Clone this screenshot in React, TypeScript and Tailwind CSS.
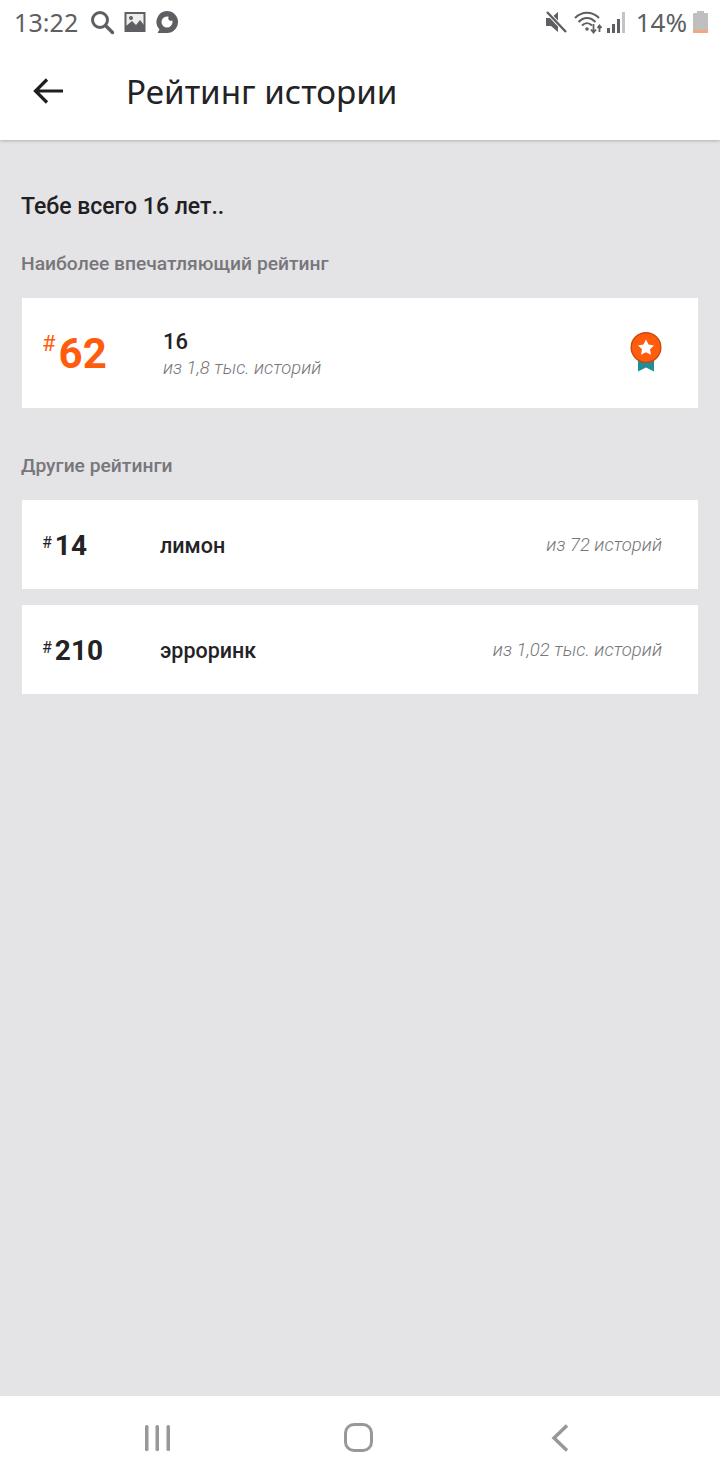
import React from "react";

const roboto = "font-['Roboto',sans-serif]";

// status bar icons are small custom drawings
const StatusBar = () => (
  <div className="h-[44px] flex items-center justify-between pl-[14px] pr-[12px] text-[#5f5f63] font-['Noto_Sans',sans-serif]">
    <div className="flex items-center">
      <span className="text-[25px] leading-none tracking-[0.1px]">13:22</span>
      <svg className="ml-[11px]" width="26" height="26" viewBox="0 0 26 26" fill="none">
        <circle cx="11" cy="11" r="7.5" stroke="#5f5f63" strokeWidth="3" />
        <path d="M16.5 16.5L23.5 23.5" stroke="#5f5f63" strokeWidth="3.4" strokeLinecap="round" />
      </svg>
      <svg className="ml-[9px]" width="22" height="22" viewBox="0 0 22 22">
        <rect x="0.5" y="1" width="21" height="20" fill="#5f5f63" />
        <rect x="2.5" y="3" width="17" height="13" fill="#ededee" />
        <path d="M2 19L2 15L8 10L12 14L16 9L20 14L20 19Z" fill="#5f5f63" />
        <circle cx="7" cy="7" r="2" fill="#5f5f63" />
      </svg>
      <svg className="ml-[9px]" width="24" height="24" viewBox="0 0 24 24">
        <path d="M12 1a11 11 0 0 1 0 22H2.5l2-3.4A11 11 0 0 1 12 1Z" fill="#5f5f63" />
        <path d="M12 6.5a5.5 5.5 0 1 0 5.5 5.5c0-.6-.1-1.2-.3-1.7a2.5 2.5 0 0 1-3.5-3.5A5.5 5.5 0 0 0 12 6.5Z" fill="#ffffff" />
      </svg>
    </div>
    <div className="flex items-center">
      <svg width="24" height="24" viewBox="0 0 24 24">
        <path d="M2 8h5l7-6v20l-7-6H2Z" fill="#5f5f63" />
        <path d="M3 2L22 22" stroke="#ffffff" strokeWidth="4" />
        <path d="M3 2L22 22" stroke="#5f5f63" strokeWidth="2.4" />
      </svg>
      <svg className="ml-[6px]" width="30" height="24" viewBox="0 0 30 24" fill="none">
        <path d="M1 8C8 1 18 1 25 8" stroke="#5f5f63" strokeWidth="2" />
        <path d="M4.5 12C9.5 6.5 16.500 6.5 21.5 12" stroke="#5f5f63" strokeWidth="2" />
        <path d="M8 15.5C11 12.5 15 12.5 18 15.5" stroke="#5f5f63" strokeWidth="2" />
        <circle cx="13" cy="19" r="1.8" fill="#5f5f63" />
        <path d="M19.5 14v8M17 19.5l2.5 3 2.5-3" stroke="#5f5f63" strokeWidth="1.8" />
        <path d="M25.5 22v-6M23.5 18l2-2.5 2 2.5" stroke="#5f5f63" strokeWidth="1.8" />
      </svg>
      <svg className="ml-[2px]" width="20" height="24" viewBox="0 0 20 24">
        <rect x="1" y="18" width="3" height="5" fill="#5f5f63" />
        <rect x="6" y="14" width="3" height="9" fill="#5f5f63" />
        <rect x="11" y="9" width="3" height="14" fill="#5f5f63" />
        <rect x="16" y="2" width="3" height="21" fill="#c4c4c6" />
      </svg>
      <span className="ml-[10px] text-[26px] leading-none">14%</span>
      <div className="ml-[6px] w-[15px] h-[22px] flex flex-col items-center">
        <div className="w-[7px] h-[2px] bg-[#c0bfc0]" />
        <div className="w-[15px] h-[20px] bg-[#c0bfc0] flex flex-col justify-end rounded-[1px]">
          <div className="h-[3px] bg-[#f4a77f]" />
        </div>
      </div>
    </div>
  </div>
);

const Header = () => (
  <div className="h-[96px] flex items-center pb-[2px]">
    <svg className="ml-[33px]" width="32" height="32" viewBox="0 0 32 32" fill="none">
      <path d="M30 16H3M14 4.5L2.5 16L14 27.5" stroke="#1f1f22" strokeWidth="3.2" />
    </svg>
    <h1 className="ml-[61px] mt-[2px] text-[33.2px] leading-none text-[#232326] font-normal font-['Noto_Sans',sans-serif]">Рейтинг истории</h1>
  </div>
);

const Medal = () => (
  <svg width="32" height="40" viewBox="0 0 32 40">
    <path d="M8 24V39.5L16 35.5L24 39.5V24Z" fill="#1f8f96" />
    <circle cx="16" cy="15.5" r="14.8" fill="#ff5c0d" stroke="#c8490f" strokeWidth="1.4" />
    <path d="M16 7.5L18.5 12.6L24 13.4L20 17.3L21 22.8L16 20.2L11 22.8L12 17.3L8 13.4L13.5 12.6Z" fill="#ffffff" />
  </svg>
);

const RankRow = ({ rank, name, total }: { rank: string; name: string; total: string }) => (
  <div className="h-[89px] bg-white flex items-center pl-[20px] pr-[36px] pt-[2px]">
    <div className="w-[118px] flex items-start text-[#232326]">
      <span className="text-[16px] leading-none mt-[3px] mr-[3px]">#</span>
      <span className="text-[28px] leading-none font-bold">{rank}</span>
    </div>
    <span className="text-[21.5px] leading-none font-medium text-[#232326]">{name}</span>
    <span className="ml-auto text-[18.5px] leading-none italic font-light text-[#77767a]">{total}</span>
  </div>
);

export default function App() {
  return (
    <div className={`w-[720px] h-[1480px] flex flex-col bg-[#e4e3e6] ${roboto}`}>
      <div className="bg-white shadow-[0_1px_3px_rgba(0,0,0,0.22)]">
        <StatusBar />
        <Header />
      </div>

      <div className="flex-1 px-[22px] pt-[53px]">
        <p className="text-[23px] leading-[28px] font-medium text-[#202023] -ml-[1px]">Тебе всего 16 лет..</p>
        <p className="mt-[31px] text-[19.25px] leading-[24px] font-medium text-[#77767a] -ml-[1px]">Наиболее впечатляющий рейтинг</p>

        <div className="mt-[22px] h-[110px] bg-white flex items-center pl-[20px] pr-[36px]">
          <div className="w-[121px] mt-[2px] flex items-start text-[#ff5c0d]">
            <span className="text-[22px] leading-none mr-[3px]">#</span>
            <span className="text-[42px] leading-none font-bold">62</span>
          </div>
          <div className="flex flex-col mt-[4px]">
            <span className="text-[22px] leading-[26px] font-medium text-[#232326]">16</span>
            <span className="text-[18.4px] leading-[26px] italic font-light text-[#77767a]">из 1,8 тыс. историй</span>
          </div>
          <div className="ml-auto mb-[2px]">
            <Medal />
          </div>
        </div>

        <p className="mt-[46px] text-[19.25px] leading-[24px] font-medium text-[#77767a] -ml-[1px]">Другие рейтинги</p>

        <div className="mt-[22px] flex flex-col gap-[16px]">
          <RankRow rank="14" name="лимон" total="из 72 историй" />
          <RankRow rank="210" name="эрроринк" total="из 1,02 тыс. историй" />
        </div>
      </div>

      <div className="h-[84px] bg-white flex items-center pl-[144px] pb-[1px]">
        <svg width="27" height="28" viewBox="0 0 27 28">
          <rect x="1" y="1" width="3.5" height="26" rx="1.5" fill="#98989b" />
          <rect x="11.5" y="1" width="3.5" height="26" rx="1.5" fill="#98989b" />
          <rect x="22.5" y="1" width="3.5" height="26" rx="1.5" fill="#98989b" />
        </svg>
        <div className="ml-[173px] w-[29px] h-[29px] rounded-[10px] border-[3.5px] border-[#98989b]" />
        <svg className="ml-[178px]" width="18" height="28" viewBox="0 0 18 28" fill="none">
          <path d="M16 1.5L3 14L16 26.5" stroke="#98989b" strokeWidth="3.5" />
        </svg>
      </div>
    </div>
  );
}
